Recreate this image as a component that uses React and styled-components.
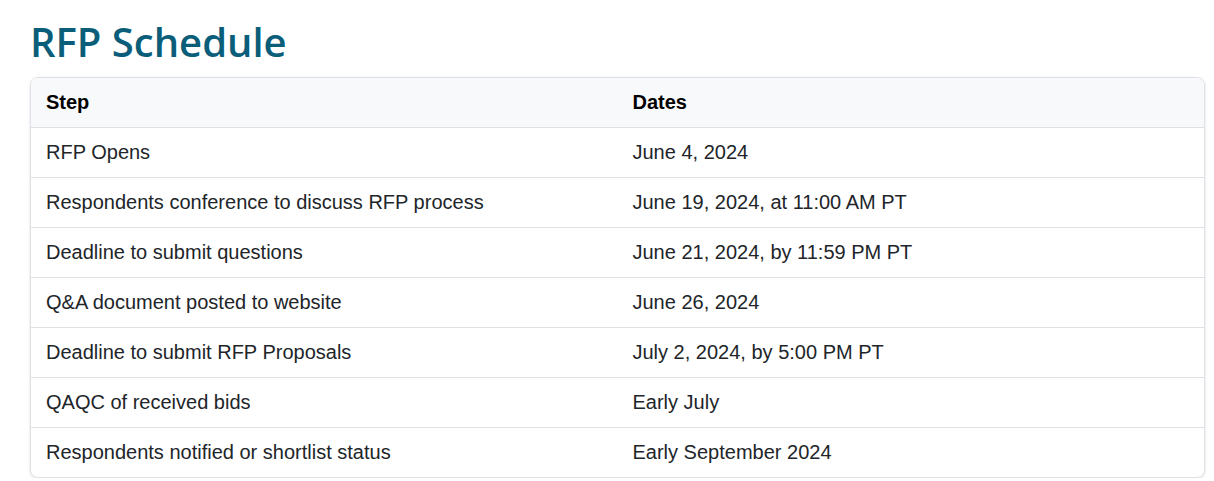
import React from "react";
import styled, { createGlobalStyle } from "styled-components";

const Global = createGlobalStyle`
  html, body { margin: 0; padding: 0; background: #fff; }
  body { font-family: "Liberation Sans", Arial, sans-serif; }
`;

const Page = styled.div`
  padding: 13px 10px 0 30px;
`;

const Title = styled.h1`
  margin: 2px 0 8px 0;
  font-family: "Open Sans", sans-serif;
  font-weight: 600;
  font-size: 40px;
  line-height: 54px;
  color: #0b5e7a;
`;

const Card = styled.div`
  width: 1173px;
  border: 1px solid #dee2e6;
  border-radius: 8px;
  overflow: hidden;
  box-shadow: 0 1px 3px rgba(0, 0, 0, 0.12);
`;

const Table = styled.table`
  width: 100%;
  border-collapse: collapse;
  table-layout: fixed;
`;

const Th = styled.th`
  text-align: left;
  font-weight: 700;
  font-size: 20px;
  color: #000;
  background: #f8f9fa;
  height: 49px;
  padding: 0 15px;
  border-bottom: 1px solid #dee2e6;
`;

const Td = styled.td`
  font-size: 20px;
  color: #212529;
  height: 49px;
  padding: 0 15px;
  border-bottom: ${(p) => (p.$last ? "none" : "1px solid #dee2e6")};
`;

const rows = [
  ["RFP Opens", "June 4, 2024"],
  ["Respondents conference to discuss RFP process", "June 19, 2024, at 11:00 AM PT"],
  ["Deadline to submit questions", "June 21, 2024, by 11:59 PM PT"],
  ["Q&A document posted to website", "June 26, 2024"],
  ["Deadline to submit RFP Proposals", "July 2, 2024, by 5:00 PM PT"],
  ["QAQC of received bids", "Early July"],
  ["Respondents notified or shortlist status", "Early September 2024"],
];

export default function App() {
  return (
    <>
      <Global />
      <Page>
        <Title>RFP Schedule</Title>
        <Card>
          <Table>
            <thead>
              <tr>
                <Th>Step</Th>
                <Th>Dates</Th>
              </tr>
            </thead>
            <tbody>
              {rows.map(([s, d], i) => (
                <tr key={i}>
                  <Td $last={i === rows.length - 1}>{s}</Td>
                  <Td $last={i === rows.length - 1}>{d}</Td>
                </tr>
              ))}
            </tbody>
          </Table>
        </Card>
      </Page>
    </>
  );
}
